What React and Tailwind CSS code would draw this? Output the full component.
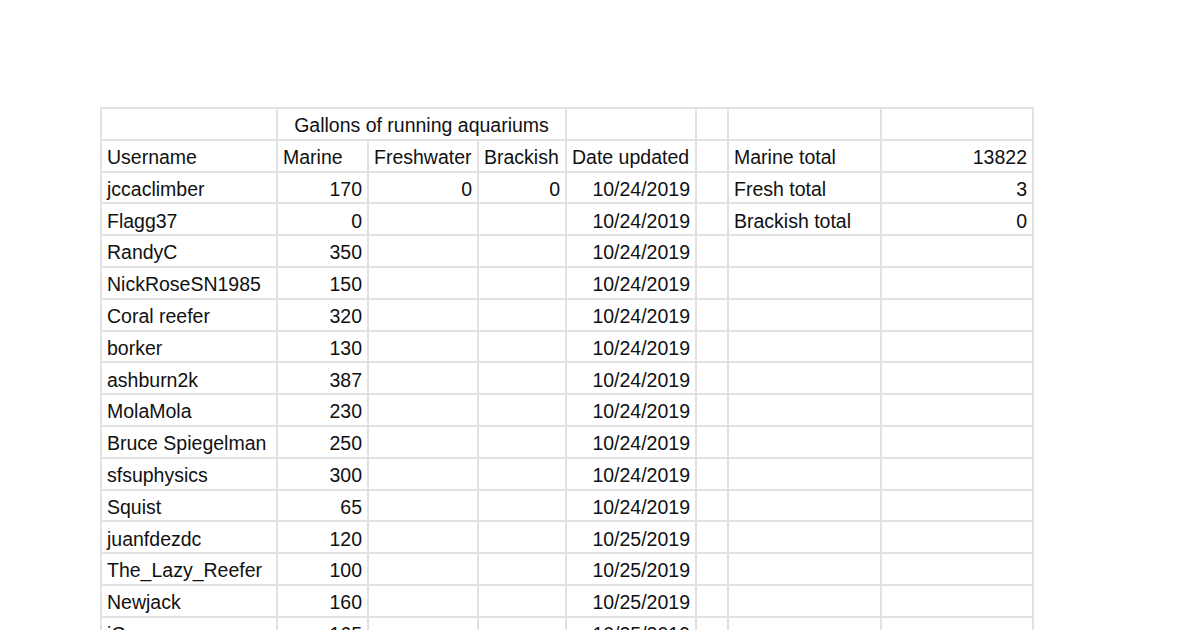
// Sheet preview: aquarium gallons table, Google Sheets look.

const users = [
  ["jccaclimber", "170", "0", "0", "10/24/2019"],
  ["Flagg37", "0", "", "", "10/24/2019"],
  ["RandyC", "350", "", "", "10/24/2019"],
  ["NickRoseSN1985", "150", "", "", "10/24/2019"],
  ["Coral reefer", "320", "", "", "10/24/2019"],
  ["borker", "130", "", "", "10/24/2019"],
  ["ashburn2k", "387", "", "", "10/24/2019"],
  ["MolaMola", "230", "", "", "10/24/2019"],
  ["Bruce Spiegelman", "250", "", "", "10/24/2019"],
  ["sfsuphysics", "300", "", "", "10/24/2019"],
  ["Squist", "65", "", "", "10/24/2019"],
  ["juanfdezdc", "120", "", "", "10/25/2019"],
  ["The_Lazy_Reefer", "100", "", "", "10/25/2019"],
  ["Newjack", "160", "", "", "10/25/2019"],
  ["iCan", "165", "", "", "10/25/2019"],
  ["", "", "", "", ""],
];

const totals = [
  ["Marine total", "13822"],
  ["Fresh total", "3"],
  ["Brackish total", "0"],
];

function Cell({ children, right, center, span }) {
  return (
    <div
      className={
        "flex items-center overflow-hidden whitespace-nowrap bg-white px-[5px] pt-[4px] " +
        (right ? "justify-end " : center ? "justify-center " : "justify-start ") +
        (span ? "col-span-3" : "")
      }
    >
      {children}
    </div>
  );
}

export default function App() {
  return (
    <div
      className="h-[630px] w-[1200px] overflow-hidden bg-white pl-[100px] pt-[107px] text-[19.5px] leading-none text-[#111]"
      style={{ fontFamily: '"Liberation Sans", Arial, sans-serif' }}
    >
      <div className="grid w-fit grid-cols-[174px_89px_108px_86px_128px_30px_151px_150px] auto-rows-[29.8px] gap-[2px] bg-[#e2e2e2] p-[2px]">
        {/* row 0 */}
        <Cell />
        <Cell center span>Gallons of running aquariums</Cell>
        <Cell />
        <Cell />
        <Cell />
        <Cell />

        {/* row 1 */}
        <Cell>Username</Cell>
        <Cell>Marine</Cell>
        <Cell>Freshwater</Cell>
        <Cell>Brackish</Cell>
        <Cell>Date updated</Cell>
        <Cell />
        <Cell>{totals[0][0]}</Cell>
        <Cell right>{totals[0][1]}</Cell>

        {users.map((u, i) => {
          const t = totals[i + 1];
          return [
            <Cell key={i + "a"}>{u[0]}</Cell>,
            <Cell key={i + "b"} right>{u[1]}</Cell>,
            <Cell key={i + "c"} right>{u[2]}</Cell>,
            <Cell key={i + "d"} right>{u[3]}</Cell>,
            <Cell key={i + "e"} right>{u[4]}</Cell>,
            <Cell key={i + "f"} />,
            <Cell key={i + "g"}>{t ? t[0] : ""}</Cell>,
            <Cell key={i + "h"} right>{t ? t[1] : ""}</Cell>,
          ];
        })}
      </div>
    </div>
  );
}
